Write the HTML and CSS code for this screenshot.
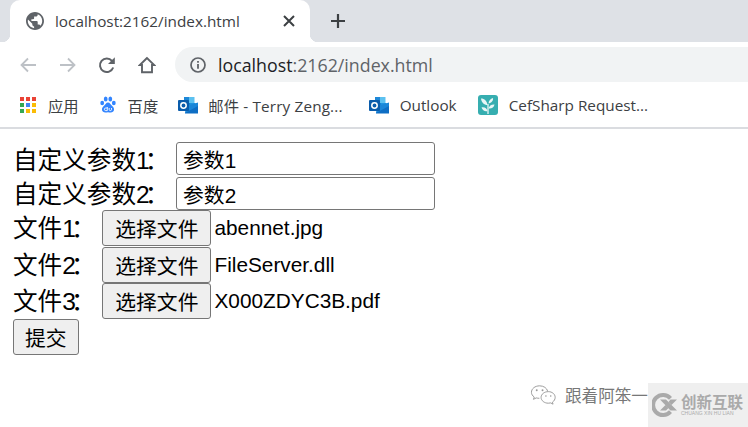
FILE: index.html
```html
<!DOCTYPE html>
<html lang="zh-CN">
<head>
<meta charset="utf-8">
<title>localhost:2162/index.html</title>
<link rel="stylesheet" href="styles.css">
</head>
<body>
<header class="chrome">
  <div class="tabstrip">
    <div class="tab">
      <svg class="tab-icon" viewBox="2 2 20 20"><path fill="#5f6368" d="M12 2C6.48 2 2 6.48 2 12s4.48 10 10 10 10-4.48 10-10S17.52 2 12 2zm-1 17.93c-3.95-.49-7-3.85-7-7.93 0-.62.08-1.21.21-1.79L9 15v1c0 1.1.9 2 2 2v1.93zm6.9-2.54c-.26-.81-1-1.39-1.9-1.39h-1v-3c0-.55-.45-1-1-1H8v-2h2c.55 0 1-.45 1-1V7h2c1.1 0 2-.9 2-2v-.41c2.93 1.19 5 4.06 5 7.41 0 2.08-.8 3.97-2.1 5.39z"/></svg>
      <span class="tab-title">localhost:2162/index.html</span>
      <svg class="tab-close" viewBox="0 0 14 14"><path d="M2 2l10 10M12 2L2 12" stroke="#3c4043" stroke-width="2" fill="none"/></svg>
    </div>
    <svg class="new-tab" viewBox="0 0 16 16"><path d="M8 1v14M1 8h14" stroke="#3c4043" stroke-width="2.2" fill="none"/></svg>
  </div>
  <div class="toolbar">
    <svg class="tool tool-back" viewBox="0 0 18 18"><path d="M17 9H3M9 2.500L2.500 9 9 15.500" stroke="#bdc1c6" stroke-width="1.800" fill="none"/></svg>
    <svg class="tool tool-fwd" viewBox="0 0 18 18"><path d="M1 9h14M9 2.500L15.500 9 9 15.500" stroke="#bdc1c6" stroke-width="1.800" fill="none"/></svg>
    <svg class="tool tool-reload" viewBox="0 0 18 18"><path d="M15.200 11.500A6.800 6.800 0 1 1 14 4.800" stroke="#5f6368" stroke-width="2" fill="none"/><path d="M16.800 1.200v6.800H10z" fill="#5f6368"/></svg>
    <svg class="tool tool-home" viewBox="0 0 18 18"><path d="M9 2L1.800 9H4v7.200h10V9h2.200z" stroke="#5f6368" stroke-width="1.900" fill="none"/></svg>
    <div class="omnibox">
      <svg class="info" viewBox="0 0 16 16"><circle cx="8" cy="8" r="7" stroke="#5f6368" stroke-width="1.700" fill="none"/><path d="M7.100 7h1.800v4.800H7.100zM7.100 4h1.800v1.800H7.100z" fill="#5f6368"/></svg>
      <span class="url"><span class="host">localhost</span>:2162/index.html</span>
    </div>
  </div>
  <nav class="bookmarks">
    <a class="bm bm-apps">
      <svg class="bm-icon-apps" viewBox="0 0 16 16">
        <rect x="0" y="0" width="4" height="4" fill="#ea4335"/><rect x="6" y="0" width="4" height="4" fill="#ea4335"/><rect x="12" y="0" width="4" height="4" fill="#ea4335"/>
        <rect x="0" y="6" width="4" height="4" fill="#34a853"/><rect x="6" y="6" width="4" height="4" fill="#4285f4"/><rect x="12" y="6" width="4" height="4" fill="#fbbc05"/>
        <rect x="0" y="12" width="4" height="4" fill="#34a853"/><rect x="6" y="12" width="4" height="4" fill="#fbbc05"/><rect x="12" y="12" width="4" height="4" fill="#fbbc05"/>
      </svg>
      <span>应用</span>
    </a>
    <a class="bm bm-baidu">
      <svg class="bm-icon-baidu" viewBox="0 0 16 17">
        <g fill="#3385ff"><ellipse cx="2.200" cy="7" rx="1.900" ry="2.300"/><ellipse cx="5.700" cy="2.900" rx="1.900" ry="2.500"/><ellipse cx="10.300" cy="2.900" rx="1.900" ry="2.500"/><ellipse cx="13.800" cy="7" rx="1.900" ry="2.300"/><path d="M8 6.500c-2 0-2.500 2-4 3.200C2.500 11 1.800 12.300 2 14c.2 1.700 1.800 2.600 3.500 2.500 1 0 1.700-.3 2.500-.3s1.500.3 2.500.3c1.700.1 3.300-.8 3.500-2.500.2-1.700-.5-3-2-4.300C10.500 8.500 10 6.500 8 6.500z"/></g>
        <path d="M7.300 11v3.600H5.700a1.300 1.300 0 1 1 0-2.600h1.600M9.200 12v1.700c0 1.200 2.300 1.200 2.300 0V12" stroke="#fff" stroke-width=".9" fill="none"/>
      </svg>
      <span>百度</span>
    </a>
    <a class="bm bm-mail">
      <svg class="bm-icon-ol" viewBox="0 0 20 20"><use href="#outlook"/></svg>
      <span class="mail-text">邮件 - Terry Zeng...</span>
    </a>
    <a class="bm bm-outlook">
      <svg class="bm-icon-ol" viewBox="0 0 20 20"><use href="#outlook"/></svg>
      <span>Outlook</span>
    </a>
    <a class="bm bm-cef">
      <svg class="bm-icon-cef" viewBox="0 0 20 20">
        <rect width="20" height="20" rx="3" fill="#36aeb0"/>
        <path d="M10 19V9" stroke="#e9f6f6" stroke-width="1.300"/>
        <path d="M9.500 10C6 10 3.500 7.500 3 3.500 6.500 3.500 9 6 9.500 10zM10.500 8.500c.2-2.700 2-5 4.500-5.500.5 2.700-1.500 5-4.500 5.500zM10.500 13.500c.5-2.500 2.800-4.200 6-4-.5 3-3 4.500-6 4zM9.500 16C9 13.500 6.500 11.800 3.500 12.500 4.500 15.500 7 16.800 9.500 16z" fill="#e9f6f6"/>
      </svg>
      <span>CefSharp Request...</span>
    </a>
  </nav>
  <svg class="defs" width="0" height="0">
    <defs>
      <g id="outlook">
        <path d="M6 2h9.500v6H6z" fill="#1e88d8"/>
        <path d="M11 2h5.500v6H11z" fill="#5cc1f0"/>
        <path d="M6 8h6v5H6z" fill="#0f6fc6"/>
        <path d="M11.500 8h6v5h-6z" fill="#1e94e0"/>
        <path d="M8 11l12-3.500V18H7z" fill="#1a86d8"/>
        <path d="M7 18l13-7v7.500H7z" fill="#0e6ec4"/>
        <rect x="0" y="5" width="11" height="11" rx="1" fill="#0a5cab"/>
        <circle cx="5.500" cy="10.500" r="2.700" fill="none" stroke="#fff" stroke-width="1.500"/>
      </g>
    </defs>
  </svg>
</header>

<main class="page">
  <form class="upload">
    <div class="row row-param"><label class="lbl">自定义参数1<span class="colon">：</span></label><input class="text" type="text" value="参数1"></div>
    <div class="row row-param"><label class="lbl">自定义参数2<span class="colon">：</span></label><input class="text" type="text" value="参数2"></div>
    <div class="row row-file"><label class="lbl">文件1<span class="colon">：</span></label><button class="btn" type="button">选择文件</button><span class="fname">abennet.jpg</span></div>
    <div class="row row-file"><label class="lbl">文件2<span class="colon">：</span></label><button class="btn" type="button">选择文件</button><span class="fname">FileServer.dll</span></div>
    <div class="row row-file"><label class="lbl">文件3<span class="colon">：</span></label><button class="btn" type="button">选择文件</button><span class="fname">X000ZDYC3B.pdf</span></div>
    <div class="row row-file"><button class="btn btn-submit" type="button">提交</button></div>
  </form>
</main>

<div class="wechat-mark">
  <svg class="wechat-icon" viewBox="0 0 28 22">
    <path d="M10 1.500C5 1.500 1.500 4.600 1.500 8.200c0 2 1.100 3.700 2.900 4.900l-.8 2.400 2.900-1.500c1 .3 2 .4 3.200.4" fill="none" stroke="#999" stroke-width="1"/>
    <path d="M10 1.500c4.200 0 7.500 2.300 8.300 5.500" fill="none" stroke="#999" stroke-width="1"/>
    <path d="M19 7.500c-4.200 0-7.500 2.700-7.500 6s3.300 6 7.500 6c.9 0 1.700-.1 2.500-.3l2.400 1.300-.6-2.100c1.700-1.100 2.800-3 2.800-4.900 0-3.300-3-6-7.100-6z" fill="none" stroke="#999" stroke-width="1"/>
    <circle cx="7" cy="6" r="1" fill="#999"/><circle cx="13" cy="6" r="1" fill="#999"/><circle cx="16.500" cy="12" r=".8" fill="#999"/><circle cx="21.500" cy="12" r=".8" fill="#999"/>
  </svg>
  <span class="wechat-text">跟着阿笨一</span>
</div>
<aside class="brand">
  <svg class="brand-logo" viewBox="0 0 25 24">
    <path d="M18.500 5.300A10 10 0 1 0 18.500 18.700" fill="none" stroke="#aaa" stroke-width="4"/>
    <path d="M8 6.500h6l11 11h-6.500z" fill="#aaa"/>
    <path d="M8 17.500l5.500-5.500 3 3-2.500 2.500zM16.500 9l2-2.500H25l-5.500 5.500z" fill="#aaa"/>
  </svg>
  <div class="brand-text">
    <div class="brand-cn">创新互联</div>
    <div class="brand-en">CHUANG XIN HU LIAN</div>
  </div>
</aside>
</body>
</html>
```

FILE: styles.css
```css
* { box-sizing: border-box; }
html, body { margin: 0; padding: 0; }
body {
  width: 748px;
  height: 427px;
  overflow: hidden;
  position: relative;
  background: #fff;
  color: #000;
  font-family: "Liberation Sans", "Noto Sans CJK SC", sans-serif;
}

.chrome { border-bottom: 2px solid #dadce0; }
.defs { position: absolute; }

.tabstrip {
  height: 42px;
  background: #dee1e6;
  padding-left: 10px;
  display: flex;
  align-items: center;
}
.tab {
  position: relative;
  width: 300px;
  height: 42px;
  background: #fff;
  border-radius: 10px 10px 0 0;
  display: flex;
  align-items: center;
  padding: 0 14px 0 16px;
}
.tab::before, .tab::after {
  content: "";
  position: absolute;
  bottom: 0;
  width: 8px;
  height: 8px;
}
.tab::before { left: -8px; background: radial-gradient(circle at 0 0, transparent 8px, #fff 8.5px); }
.tab::after { right: -8px; background: radial-gradient(circle at 100% 0, transparent 8px, #fff 8.5px); }
.tab-icon { width: 18px; height: 18px; flex: none; }
.tab-title {
  margin-left: 11px;
  flex: 1;
  font: 15.3px "Open Sans", "Noto Sans", sans-serif;
  color: #3c4043;
  white-space: nowrap;
}
.tab-close { width: 14px; height: 14px; flex: none; }
.new-tab { width: 16px; height: 16px; margin-left: 20px; }

.toolbar {
  height: 40px;
  display: flex;
  align-items: center;
  padding: 5px 0 0 19px;
}
.tool { flex: none; width: 18px; height: 18px; }
.tool-fwd { margin-left: 22px; }
.tool-reload { margin-left: 21px; }
.tool-home { margin-left: 22px; }
.omnibox {
  margin-left: 19px;
  flex: 1;
  height: 35px;
  background: #f1f3f4;
  border-radius: 18px 0 0 18px;
  display: flex;
  align-items: center;
  padding-left: 15px;
}
.info { width: 16px; height: 16px; flex: none; }
.url {
  margin-left: 12px;
  font: 17.8px "Open Sans", "Noto Sans", sans-serif;
  color: #5f6368;
  white-space: nowrap;
}
.host { color: #202124; }

.bookmarks {
  height: 45px;
  display: flex;
  align-items: center;
  padding-left: 20px;
  gap: 21px;
  font: 15.3px "Open Sans", "Noto Sans CJK SC", sans-serif;
  color: #3c4043;
}
.bm { display: flex; align-items: center; gap: 10px; white-space: nowrap; }
.bm-apps, .bm-baidu { gap: 12px; }
.bm-baidu { margin-right: -1px; }
.bm-mail { margin-right: 5px; }
.bm-outlook { gap: 11px; }
.bm-cef { gap: 11px; }
.mail-text { letter-spacing: .15px; }
.bm-icon-apps { width: 16px; height: 16px; }
.bm-icon-baidu { width: 16px; height: 17px; }
.bm-icon-ol { width: 20px; height: 20px; }
.bm-icon-cef { width: 20px; height: 20px; }

.page { padding: 13px 0 0 13px; }
.upload { display: flex; flex-direction: column; }
.row { display: flex; align-items: flex-start; font-size: 20.8px; }
.row-param { height: 35px; }
.row-param + .row-param { height: 33px; }
.row-file { height: 36.4px; align-items: center; }
.lbl { font-size: 24.6px; line-height: 1; white-space: nowrap; align-self: center; }
.colon {
  font-family: "Noto Sans CJK TC", sans-serif;
  margin-left: -5px;
  margin-right: 6.8px;
}
.text {
  width: 259px;
  height: 33px;
  border: 1px solid #767676;
  border-radius: 3px;
  padding: 0 6px;
  font: 20.8px "Liberation Sans", "Noto Sans CJK SC", sans-serif;
  color: #000;
  background: #fff;
}
.btn {
  height: 36px;
  padding: 0 12px;
  border: 1px solid #767676;
  border-radius: 3px;
  background: #efefef;
  font: 20.8px "Liberation Sans", "Noto Sans CJK SC", sans-serif;
  color: #000;
}
.btn-submit { padding: 0 11px; }
.fname { margin-left: 3px; white-space: nowrap; }

.wechat-mark {
  position: absolute;
  left: 530px;
  top: 383px;
  display: flex;
  align-items: center;
  gap: 8px;
}
.wechat-icon { width: 27px; height: 22px; }
.wechat-text { font-size: 16.6px; color: #777; white-space: nowrap; }
.brand {
  position: absolute;
  right: 0;
  bottom: 0;
  width: 100px;
  height: 44px;
  background: #efefef;
  display: flex;
  align-items: center;
  padding-left: 4px;
  gap: 4px;
}
.brand-logo { width: 25px; height: 24px; flex: none; }
.brand-text { color: #aaa; }
.brand-cn { font-size: 15.5px; font-weight: 700; line-height: 15px; white-space: nowrap; }
.brand-en { font-size: 5px; line-height: 6px; white-space: nowrap; }
```
